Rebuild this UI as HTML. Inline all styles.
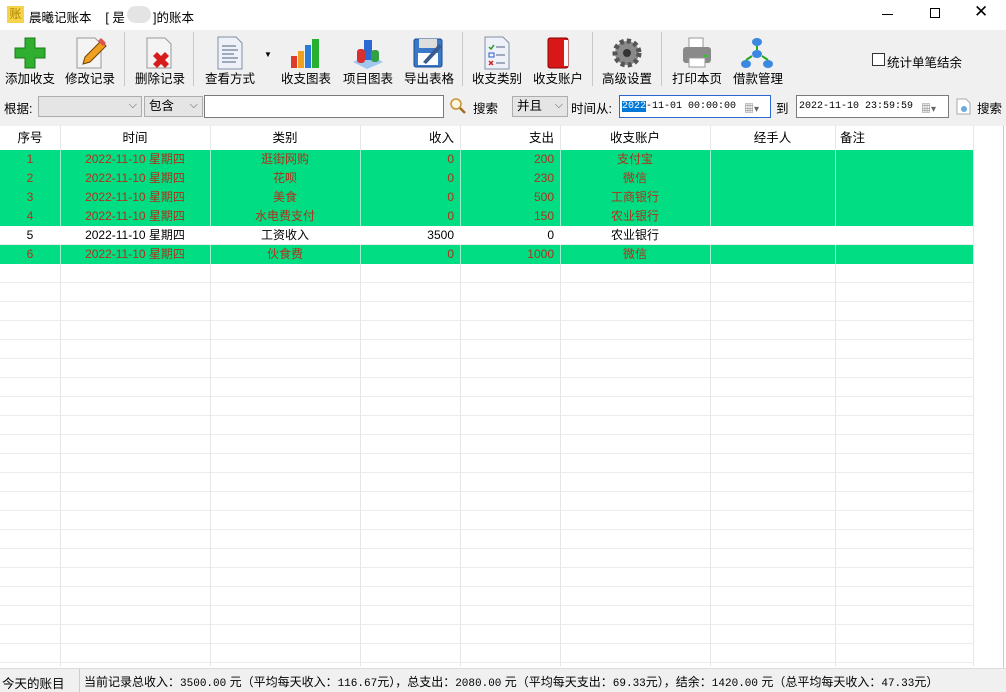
<!DOCTYPE html>
<html><head><meta charset="utf-8"><style>
*{box-sizing:border-box;margin:0;padding:0}
body{width:1006px;height:692px;position:relative;overflow:hidden;background:#fff;font-family:"Liberation Sans","Noto Sans CJK SC","WenQuanYi Zen Hei",sans-serif;font-size:12px;color:#000}
.a{position:absolute}
.tb{background:#f0f0f0}
.lbl{position:absolute;top:68px;font-size:12.5px;white-space:nowrap;transform:translateX(-50%)}
.sep{position:absolute;top:32px;width:1px;height:54px;background:#c8c8c8}
.ic{position:absolute;top:36px;width:34px;height:34px}
.combo{position:absolute;top:96px;height:21px;border:1px solid #adadad;background:#e5e5e5;font-size:12.5px;padding:0 4px;line-height:19px}
.combo:after{content:"⌵";position:absolute;right:4px;top:-1px;font-size:11px;color:#555}
.inp{position:absolute;top:95px;height:23px;border:1px solid #7a7a7a;background:#fff}
.t{position:absolute;font-size:12.5px;white-space:nowrap}
.hdr{position:absolute;top:126px;height:24px;line-height:24px;font-size:12.5px}
.row{position:absolute;left:0;width:973px;height:19px;font-size:12px;line-height:19px}
.g{background:#00dd82;color:#b0301c}
.c{position:absolute;top:0;height:19px;white-space:nowrap}
.vl{position:absolute;top:126px;width:1px;height:540px;background:#e6e6e6}
.mono{font-family:"Liberation Mono","Noto Sans CJK SC",monospace;font-size:10px}
.sm{font-family:"Liberation Mono",monospace;font-size:11px}
</style></head><body>
<div class="a" style="left:7px;top:6px;width:17px;height:17px;background:#f6d34a;color:#b08400;font-size:12px;line-height:17px;text-align:center">账</div>
<div class="t" style="left:29px;top:7px;font-size:12.5px">晨曦记账本 &nbsp;&nbsp;&nbsp;[ 是</div>
<div class="a" style="left:127px;top:6px;width:24px;height:17px;border-radius:9px;background:#e4e4e4"></div>
<div class="t" style="left:153px;top:7px;font-size:12.5px">]的账本</div>
<div class="a" style="left:882px;top:14px;width:11px;height:1px;background:#000"></div>
<div class="a" style="left:930px;top:8px;width:10px;height:10px;border:1px solid #000"></div>
<div class="t" style="left:974px;top:2px;font-size:17px;font-weight:300">✕</div>
<div class="a tb" style="left:0;top:30px;width:1006px;height:96px"></div>
<svg class="ic" style="left:13px" viewBox="0 0 34 34"><path d="M12 2h10v10h10v10H22v10H12V22H2V12h10z" fill="#2fae2f" stroke="#1a7a1a"/></svg>
<svg class="ic" style="left:73px" viewBox="0 0 34 34"><path d="M4 2h18l6 6v24H4z" fill="#f4f4f4" stroke="#999"/><path d="M10 28l2-7 16-16 5 5-16 16z" fill="#f0a020" stroke="#704000"/><path d="M25 5l3-3 5 5-3 3z" fill="#e05050"/></svg>
<svg class="ic" style="left:143px" viewBox="0 0 34 34"><path d="M4 2h18l6 6v24H4z" fill="#f4f4f4" stroke="#999"/><path d="M14 16l4 4 4-4 4 4-4 4 4 4-4 4-4-4-4 4-4-4 4-4-4-4z" fill="#d81c1c"/></svg>
<svg class="ic" style="left:213px" viewBox="0 0 34 34"><path d="M5 1h18l6 6v26H5z" fill="#eef2f8" stroke="#8090a8"/><path d="M9 10h14M9 14h16M9 18h12M9 22h16M9 26h14" stroke="#506080"/></svg>
<div class="t" style="left:264px;top:50px;font-size:8px">▼</div>
<svg class="ic" style="left:289px" viewBox="0 0 34 34"><rect x="2" y="20" width="6" height="12" fill="#e03a2a"/><rect x="9" y="15" width="6" height="17" fill="#f0a020"/><rect x="16" y="9" width="6" height="23" fill="#2a7ad8"/><rect x="23" y="3" width="7" height="29" fill="#28b030"/></svg>
<svg class="ic" style="left:351px" viewBox="0 0 34 34"><path d="M2 26l16-8 14 8-16 7z" fill="#9ec8f0"/><rect x="13" y="4" width="8" height="20" fill="#2a6ad0"/><rect x="6" y="13" width="8" height="14" rx="3" fill="#d83030"/><rect x="20" y="14" width="8" height="12" rx="3" fill="#30a040"/></svg>
<svg class="ic" style="left:411px" viewBox="0 0 34 34"><rect x="3" y="3" width="28" height="28" rx="2" fill="#3a78c8" stroke="#1a4a90"/><rect x="8" y="3" width="18" height="9" fill="#ddd"/><rect x="7" y="17" width="20" height="12" fill="#fff"/><path d="M12 26l16-18 3 3-16 17z" fill="#3a5a90"/></svg>
<svg class="ic" style="left:480px" viewBox="0 0 34 34"><path d="M5 1h18l6 6v26H5z" fill="#eef2f8" stroke="#8090a8"/><path d="M9 11l2 2 3-4" stroke="#2a9a2a" fill="none" stroke-width="1.5"/><rect x="9" y="17" width="5" height="4" fill="none" stroke="#2a5ad0"/><path d="M9 25l4 4M13 25l-4 4" stroke="#d02020" stroke-width="1.5"/><path d="M16 11h9M16 19h9M16 27h9" stroke="#506080"/></svg>
<svg class="ic" style="left:541px" viewBox="0 0 34 34"><rect x="7" y="2" width="20" height="30" rx="2" fill="#d81818" stroke="#800"/><rect x="23" y="4" width="4" height="26" fill="#f8f8f8"/></svg>
<svg class="ic" style="left:610px" viewBox="0 0 34 34"><circle cx="17" cy="17" r="12" fill="#8a8a8a" stroke="#555" stroke-width="5" stroke-dasharray="4 3"/><circle cx="17" cy="17" r="4" fill="#333"/></svg>
<svg class="ic" style="left:680px" viewBox="0 0 34 34"><rect x="9" y="2" width="14" height="10" fill="#fff" stroke="#999"/><rect x="3" y="11" width="28" height="16" rx="3" fill="#8a8a8a"/><rect x="9" y="22" width="16" height="9" fill="#fff" stroke="#999"/><rect x="23" y="19" width="4" height="2" fill="#2c2"/></svg>
<svg class="ic" style="left:740px" viewBox="0 0 34 34"><ellipse cx="17" cy="6" rx="5" ry="4" fill="#3a88e0"/><ellipse cx="17" cy="18" rx="5" ry="4" fill="#3a88e0"/><ellipse cx="6" cy="28" rx="5" ry="4" fill="#3a88e0"/><ellipse cx="28" cy="28" rx="5" ry="4" fill="#3a88e0"/><path d="M17 10v4M12 20l-6 4M22 20l6 4" stroke="#2a2" stroke-width="2"/></svg>
<div class="sep" style="left:124px"></div><div class="sep" style="left:193px"></div><div class="sep" style="left:462px"></div><div class="sep" style="left:592px"></div><div class="sep" style="left:661px"></div>
<div class="lbl" style="left:30px">添加收支</div><div class="lbl" style="left:90px">修改记录</div><div class="lbl" style="left:160px">删除记录</div><div class="lbl" style="left:230px">查看方式</div><div class="lbl" style="left:306px">收支图表</div><div class="lbl" style="left:368px">项目图表</div><div class="lbl" style="left:429px">导出表格</div><div class="lbl" style="left:497px">收支类别</div><div class="lbl" style="left:558px">收支账户</div><div class="lbl" style="left:627px">高级设置</div><div class="lbl" style="left:697px">打印本页</div><div class="lbl" style="left:758px">借款管理</div>
<div class="a" style="left:872px;top:53px;width:13px;height:13px;border:1px solid #333;background:#fff"></div>
<div class="t" style="left:887px;top:52px">统计单笔结余</div>
<div class="t" style="left:4px;top:98px">根据:</div>
<div class="combo" style="left:38px;width:104px"></div>
<div class="combo" style="left:144px;width:59px">包含</div>
<div class="inp" style="left:204px;width:240px"></div>
<svg class="a" style="left:449px;top:97px" width="18" height="18" viewBox="0 0 18 18"><circle cx="7" cy="7" r="5" fill="#fff8e0" stroke="#c89030" stroke-width="1.5"/><path d="M11 11l5 5" stroke="#a07020" stroke-width="2.5"/></svg>
<div class="t" style="left:473px;top:98px">搜索</div>
<div class="combo" style="left:512px;width:56px">并且</div>
<div class="t" style="left:571px;top:98px">时间从:</div>
<div class="inp mono" style="left:619px;width:152px;border-color:#2a6ad0;padding:0 2px;line-height:21px;font-size:10px"><span style="background:#0078d7;color:#fff">2022</span>-11-01 00:00:00</div>
<div class="t" style="left:744px;top:100px;font-size:10px;color:#666">▦▾</div>
<div class="t" style="left:776px;top:98px">到</div>
<div class="inp mono" style="left:796px;width:153px;padding:0 2px;line-height:21px;font-size:10px">2022-11-10 23:59:59</div>
<div class="t" style="left:921px;top:100px;font-size:10px;color:#666">▦▾</div>
<svg class="a" style="left:956px;top:98px" width="15" height="17" viewBox="0 0 15 17"><path d="M1 1h9l4 4v11H1z" fill="#fff" stroke="#aaa"/><circle cx="8" cy="11" r="3" fill="#6aaae0"/></svg>
<div class="t" style="left:977px;top:98px">搜索</div>
<div class="a" style="left:0;top:150px;width:973px;height:516px;background:repeating-linear-gradient(to bottom,#fff 0,#fff 18px,#ececec 18px,#ececec 19px)"></div>
<div class="vl" style="left:60px"></div><div class="vl" style="left:210px"></div><div class="vl" style="left:360px"></div><div class="vl" style="left:460px"></div><div class="vl" style="left:560px"></div><div class="vl" style="left:710px"></div><div class="vl" style="left:835px"></div><div class="vl" style="left:973px"></div>
<div class="a" style="left:1003px;top:126px;width:1px;height:542px;background:#ccc"></div>
<div class="hdr" style="left:0;width:60px;text-align:center">序号</div>
<div class="hdr" style="left:60px;width:150px;text-align:center">时间</div>
<div class="hdr" style="left:210px;width:150px;text-align:center">类别</div>
<div class="hdr" style="left:360px;width:94px;text-align:right">收入</div>
<div class="hdr" style="left:460px;width:94px;text-align:right">支出</div>
<div class="hdr" style="left:560px;width:150px;text-align:center">收支账户</div>
<div class="hdr" style="left:710px;width:125px;text-align:center">经手人</div>
<div class="hdr" style="left:840px">备注</div>

<div class="row g" style="top:150px"><span class="c" style="left:0;width:60px;text-align:center">1</span><span class="c" style="left:60px;width:150px;text-align:center">2022-11-10 星期四</span><span class="c" style="left:210px;width:150px;text-align:center">逛街网购</span><span class="c" style="left:360px;width:94px;text-align:right">0</span><span class="c" style="left:460px;width:94px;text-align:right">200</span><span class="c" style="left:560px;width:150px;text-align:center">支付宝</span></div>
<div class="row g" style="top:169px"><span class="c" style="left:0;width:60px;text-align:center">2</span><span class="c" style="left:60px;width:150px;text-align:center">2022-11-10 星期四</span><span class="c" style="left:210px;width:150px;text-align:center">花呗</span><span class="c" style="left:360px;width:94px;text-align:right">0</span><span class="c" style="left:460px;width:94px;text-align:right">230</span><span class="c" style="left:560px;width:150px;text-align:center">微信</span></div>
<div class="row g" style="top:188px"><span class="c" style="left:0;width:60px;text-align:center">3</span><span class="c" style="left:60px;width:150px;text-align:center">2022-11-10 星期四</span><span class="c" style="left:210px;width:150px;text-align:center">美食</span><span class="c" style="left:360px;width:94px;text-align:right">0</span><span class="c" style="left:460px;width:94px;text-align:right">500</span><span class="c" style="left:560px;width:150px;text-align:center">工商银行</span></div>
<div class="row g" style="top:207px"><span class="c" style="left:0;width:60px;text-align:center">4</span><span class="c" style="left:60px;width:150px;text-align:center">2022-11-10 星期四</span><span class="c" style="left:210px;width:150px;text-align:center">水电费支付</span><span class="c" style="left:360px;width:94px;text-align:right">0</span><span class="c" style="left:460px;width:94px;text-align:right">150</span><span class="c" style="left:560px;width:150px;text-align:center">农业银行</span></div>
<div class="row" style="top:226px;background:#fff;height:18px"><span class="c" style="left:0;width:60px;text-align:center">5</span><span class="c" style="left:60px;width:150px;text-align:center">2022-11-10 星期四</span><span class="c" style="left:210px;width:150px;text-align:center">工资收入</span><span class="c" style="left:360px;width:94px;text-align:right">3500</span><span class="c" style="left:460px;width:94px;text-align:right">0</span><span class="c" style="left:560px;width:150px;text-align:center">农业银行</span></div>
<div class="row g" style="top:245px"><span class="c" style="left:0;width:60px;text-align:center">6</span><span class="c" style="left:60px;width:150px;text-align:center">2022-11-10 星期四</span><span class="c" style="left:210px;width:150px;text-align:center">伙食费</span><span class="c" style="left:360px;width:94px;text-align:right">0</span><span class="c" style="left:460px;width:94px;text-align:right">1000</span><span class="c" style="left:560px;width:150px;text-align:center">微信</span></div>
<div class="a" style="left:60px;top:150px;width:1px;height:114px;background:rgba(255,255,255,.6)"></div>
<div class="a" style="left:210px;top:150px;width:1px;height:114px;background:rgba(255,255,255,.6)"></div>
<div class="a" style="left:360px;top:150px;width:1px;height:114px;background:rgba(255,255,255,.6)"></div>
<div class="a" style="left:460px;top:150px;width:1px;height:114px;background:rgba(255,255,255,.6)"></div>
<div class="a" style="left:560px;top:150px;width:1px;height:114px;background:rgba(255,255,255,.6)"></div>
<div class="a" style="left:710px;top:150px;width:1px;height:114px;background:rgba(255,255,255,.6)"></div>
<div class="a" style="left:835px;top:150px;width:1px;height:114px;background:rgba(255,255,255,.6)"></div>
<div class="a tb" style="left:0;top:668px;width:1006px;height:24px;border-top:1px solid #ddd"></div>
<div class="a" style="left:79px;top:669px;width:1px;height:23px;background:#ccc"></div>
<div class="t" style="left:2px;top:673px">今天的账目</div>
<div class="t" style="left:84px;top:673px;font-size:12px">当前记录总收入：<span class="sm">3500.00</span> 元（平均每天收入：<span class="sm">116.67</span>元），总支出：<span class="sm">2080.00</span> 元（平均每天支出：<span class="sm">69.33</span>元），结余：<span class="sm">1420.00</span> 元（总平均每天收入：<span class="sm">47.33</span>元）</div>
</body></html>
